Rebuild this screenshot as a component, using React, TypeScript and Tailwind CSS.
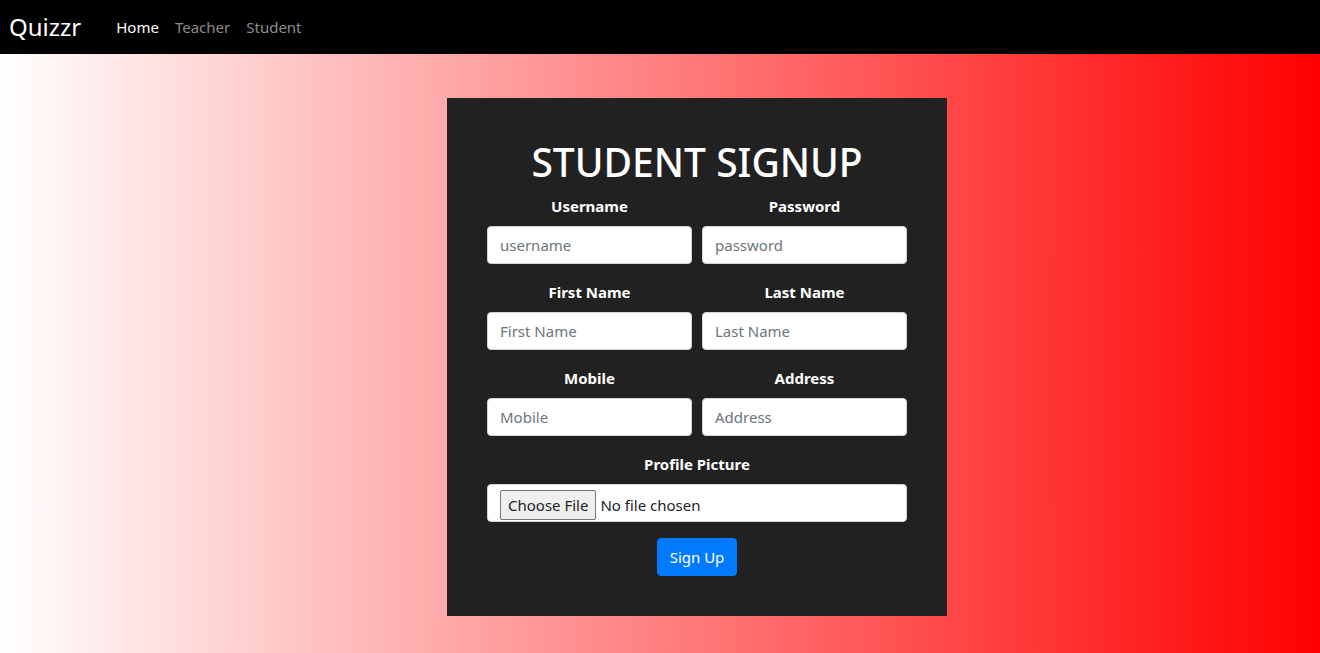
import { useState } from 'react';

const font = { fontFamily: '"Noto Sans", "Open Sans", sans-serif' };

function Field({ label, placeholder, type = 'text' }: { label: string; placeholder: string; type?: string }) {
  const [value, setValue] = useState('');
  return (
    <div className="flex flex-col mb-4">
      <label className="text-white font-bold text-[15px] leading-6 text-center mb-2">{label}</label>
      <input
        type={type}
        value={value}
        onChange={(e) => setValue(e.target.value)}
        placeholder={placeholder}
        className="h-[38px] w-full bg-white border border-[#ced4da] rounded-[4px] px-3 text-[15px] text-[#495057] placeholder:text-[#6c757d] outline-none"
      />
    </div>
  );
}

export default function App() {
  return (
    <div className="min-h-screen bg-[linear-gradient(to_right,#ffffff,#ff0000)]" style={font}>
      <nav className="h-[54px] bg-black flex items-center pl-[9px]">
        <a href="#" className="text-white text-[24px] leading-none mr-[35px]">Quizzr</a>
        <div className="flex items-center text-[15px]">
          <a href="#" className="text-white pr-2">Home</a>
          <a href="#" className="text-[#8c8c8c] px-2">Teacher</a>
          <a href="#" className="text-[#8c8c8c] px-2">Student</a>
        </div>
      </nav>

      <div className="pt-[44px] pl-[447px]">
        <div className="w-[500px] bg-[#212121] px-10 pt-[40px] pb-10">
          <h1 className="text-white text-[39px] leading-[48px] font-medium text-center mb-2">STUDENT SIGNUP</h1>
          <div className="grid grid-cols-2 gap-x-[10px]">
            <Field label="Username" placeholder="username" />
            <Field label="Password" placeholder="password" type="password" />
            <Field label="First Name" placeholder="First Name" />
            <Field label="Last Name" placeholder="Last Name" />
            <Field label="Mobile" placeholder="Mobile" />
            <Field label="Address" placeholder="Address" />
          </div>
          <div className="flex flex-col mb-4">
            <label className="text-white font-bold text-[15px] leading-6 text-center mb-2">Profile Picture</label>
            <input
              type="file"
              className="h-[38px] w-full bg-white border border-[#ced4da] rounded-[4px] pl-3 pr-3 pt-[5px] text-[15px] text-[#212529] file:h-[30px] file:border file:border-[#767676] file:bg-[#efefef] file:rounded-[2px] file:px-[7px] file:mr-[4px] file:text-[#212529]"
            />
          </div>
          <div className="flex justify-center">
            <button className="bg-[#007bff] text-white text-[15px] leading-6 px-3 py-[6px] rounded-[4px] border border-[#007bff]">
              Sign Up
            </button>
          </div>
        </div>
      </div>
    </div>
  );
}
